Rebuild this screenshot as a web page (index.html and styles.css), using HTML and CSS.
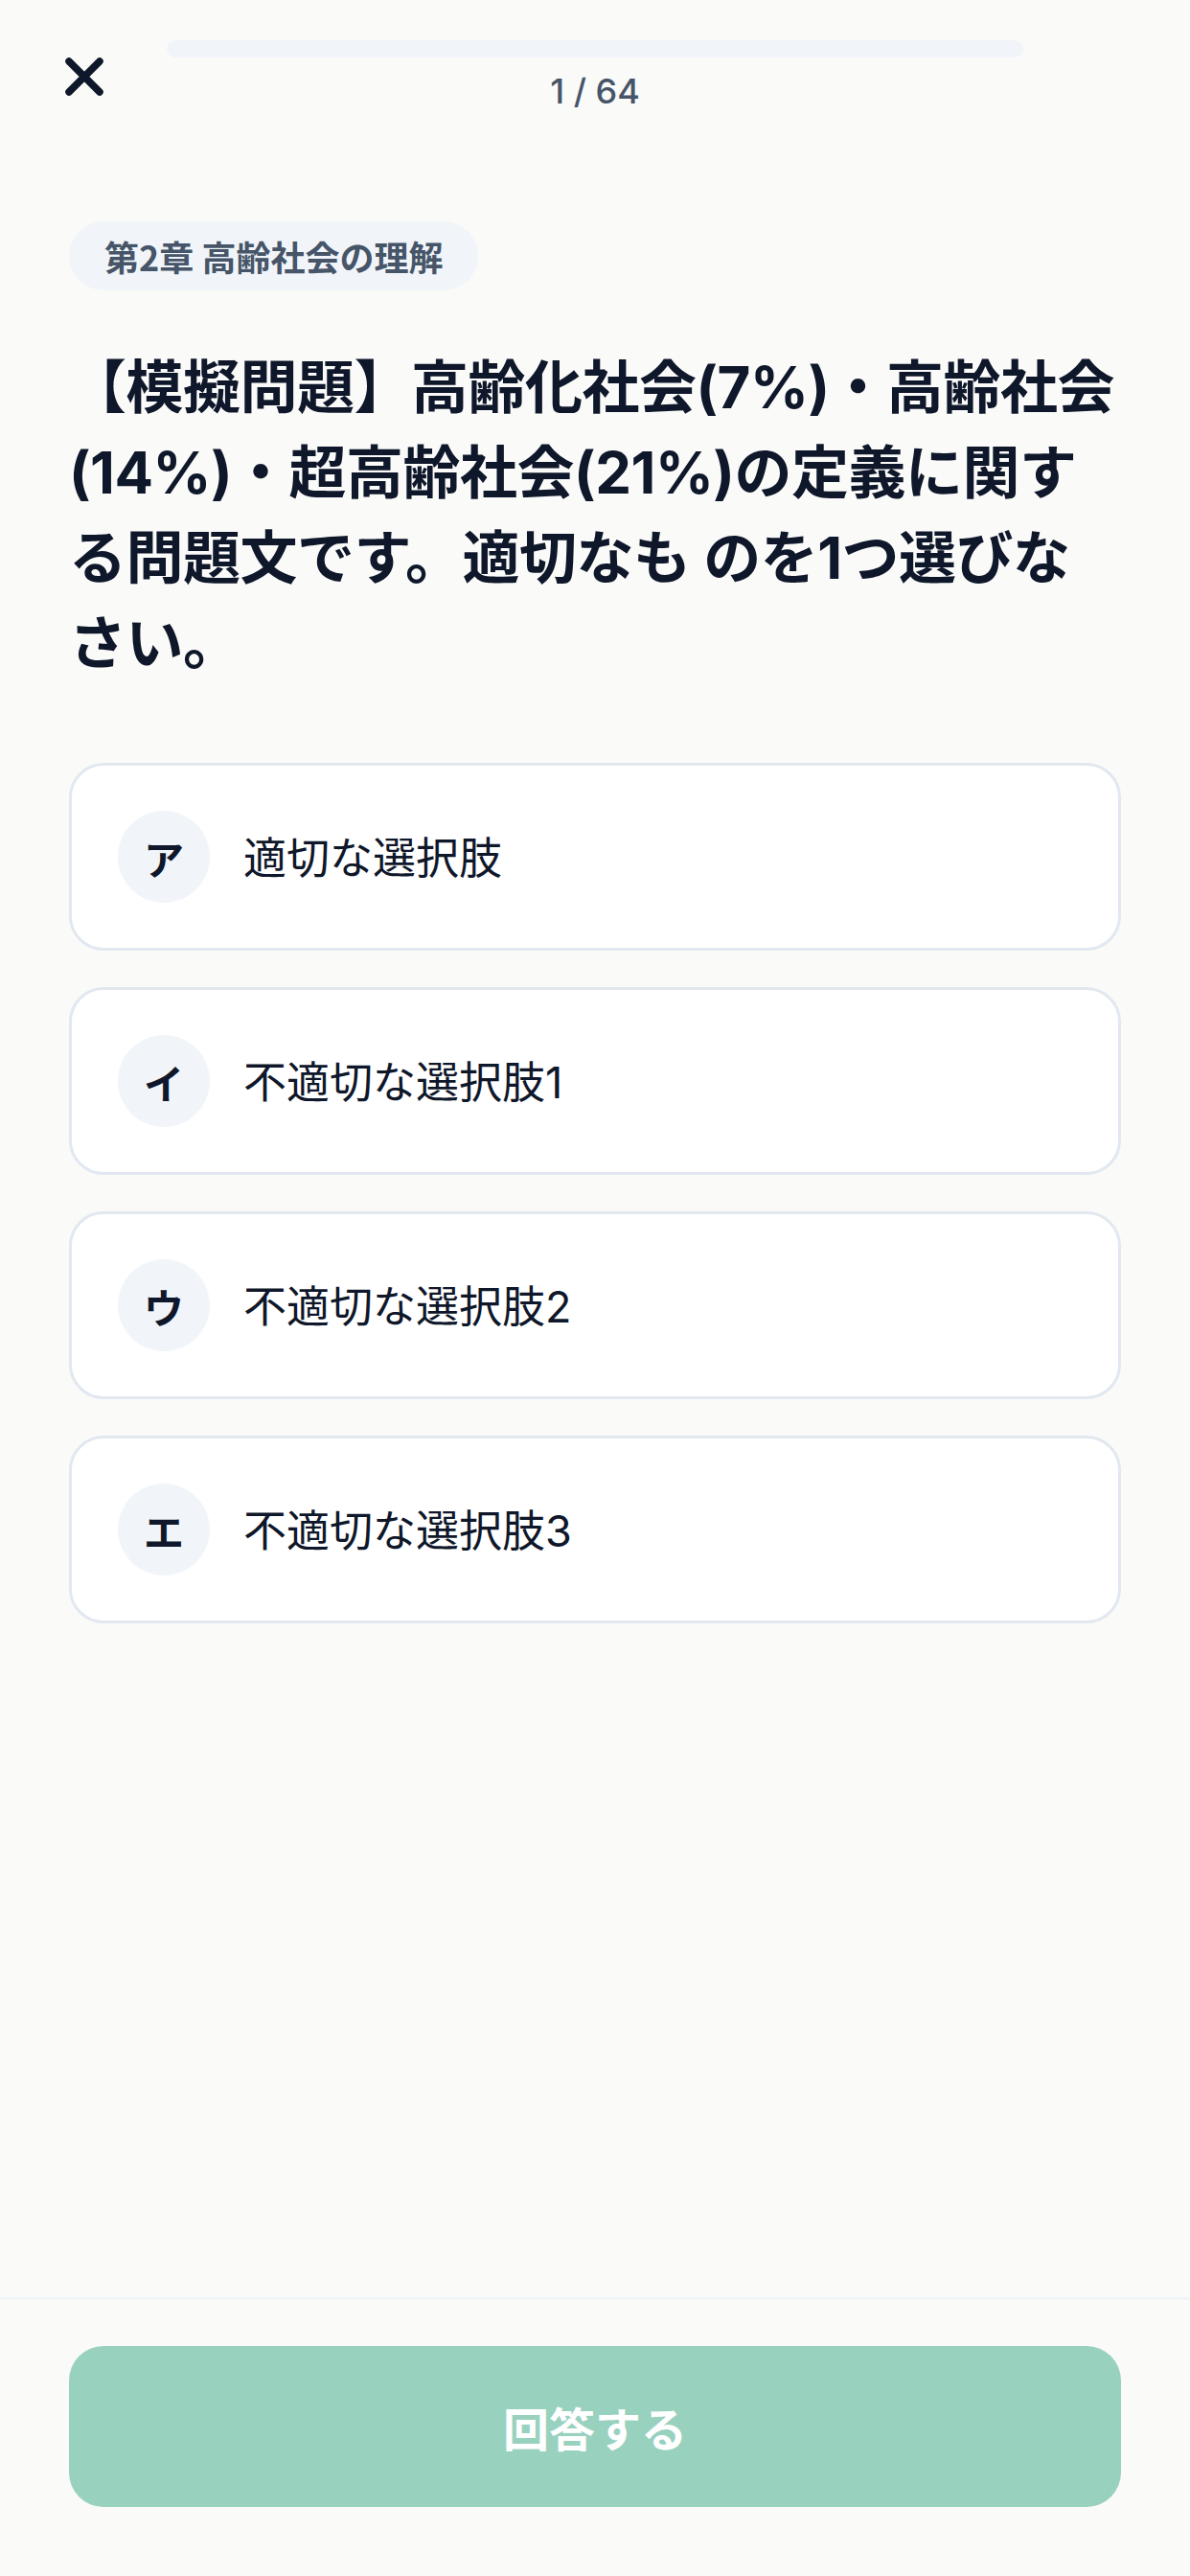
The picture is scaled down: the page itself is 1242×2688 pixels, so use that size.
FILE: index.html
```html
<!DOCTYPE html>
<html lang="ja">
<head>
<meta charset="utf-8">
<title>問題</title>
<link rel="stylesheet" href="styles.css">
</head>
<body>
<div class="page">
  <header class="topbar">
    <button class="close-btn" aria-label="閉じる">
      <svg width="40" height="40" viewBox="0 0 40 40" fill="none" stroke="#0f172a" stroke-width="7.5" stroke-linecap="round">
        <path d="M4 4 L36 36 M36 4 L4 36"/>
      </svg>
    </button>
    <div class="progress">
      <div class="progress-track"><div class="progress-fill"></div></div>
      <div class="progress-label">1 / 64</div>
    </div>
    <div class="spacer"></div>
  </header>

  <main class="content">
    <div class="chapter-badge">第2章 高齢社会の理解</div>
    <h1 class="question">【模擬問題】高齢化社会(7%)・高齢社会(14%)・超高齢社会(21%)の定義に関する問題文です。適切なも のを1つ選びなさい。</h1>

    <ul class="options">
      <li class="option"><span class="option-key">ア</span><span class="option-text">適切な選択肢</span></li>
      <li class="option"><span class="option-key">イ</span><span class="option-text">不適切な選択肢1</span></li>
      <li class="option"><span class="option-key">ウ</span><span class="option-text">不適切な選択肢2</span></li>
      <li class="option"><span class="option-key">エ</span><span class="option-text">不適切な選択肢3</span></li>
    </ul>
  </main>

  <footer class="footer">
    <button class="answer-btn" disabled>回答する</button>
  </footer>
</div>
</body>
</html>
```

FILE: styles.css
```css
* { box-sizing: border-box; }

html, body {
  margin: 0;
  padding: 0;
  background: #fafaf9;
}

body {
  font-family: Inter, "Noto Sans CJK JP", sans-serif;
  color: #0f172a;
}

.page {
  min-height: 2688px;
  display: flex;
  flex-direction: column;
}

.topbar {
  display: flex;
  align-items: center;
  gap: 46px;
  padding: 40px 48px 0;
}

.close-btn {
  flex: none;
  width: 80px;
  height: 80px;
  padding: 0;
  border: 0;
  background: transparent;
  display: flex;
  align-items: center;
  justify-content: center;
}

.spacer {
  flex: none;
  width: 80px;
  height: 80px;
}

.progress {
  flex: 1;
  display: flex;
  flex-direction: column;
  align-items: center;
}

.progress-track {
  width: 100%;
  height: 18px;
  border-radius: 9px;
  background: #f1f5f9;
  overflow: hidden;
}

.progress-fill {
  width: 0;
  height: 100%;
  background: #059669;
}

.progress-label {
  margin-top: 11px;
  font-size: 36px;
  line-height: 48px;
  font-weight: 500;
  color: #475569;
}

.content {
  flex: 1;
  padding: 111px 72px 0;
}

.chapter-badge {
  display: inline-flex;
  align-items: center;
  height: 72px;
  padding: 0 37px;
  border-radius: 36px;
  background: #f1f5f9;
  color: #475569;
  font-size: 36px;
  font-weight: 700;
  font-family: "Noto Sans CJK JP", sans-serif;
}

.question {
  margin: 57px 0 0;
  font-size: 60px;
  line-height: 89px;
  font-weight: 700;
  letter-spacing: -0.5px;
  color: #0f172a;
  font-family: Inter, "Noto Sans CJK JP", sans-serif;
}

.options {
  list-style: none;
  margin: 80px 0 0;
  padding: 0;
  display: flex;
  flex-direction: column;
  gap: 38px;
}

.option {
  height: 196px;
  display: flex;
  align-items: center;
  gap: 35px;
  padding: 0 48px;
  background: #ffffff;
  border: 3px solid #e2e8f0;
  border-radius: 36px;
}

.option-key {
  flex: none;
  width: 96px;
  height: 96px;
  border-radius: 50%;
  background: #f1f5f9;
  display: flex;
  align-items: center;
  justify-content: center;
  font-size: 42px;
  font-weight: 700;
  color: #0f172a;
  font-family: "Noto Sans CJK JP", sans-serif;
}

.option-text {
  font-size: 45px;
  font-weight: 400;
  color: #0f172a;
  margin-top: -3px;
  font-family: Inter, "Noto Sans CJK JP", sans-serif;
}

.footer {
  border-top: 3px solid #f1f5f9;
  padding: 48px 72px 72px;
}

.answer-btn {
  width: 100%;
  height: 168px;
  border: 0;
  border-radius: 36px;
  background: #99d1bf;
  color: #ffffff;
  font-size: 48px;
  font-weight: 700;
  font-family: "Noto Sans CJK JP", sans-serif;
}
```
